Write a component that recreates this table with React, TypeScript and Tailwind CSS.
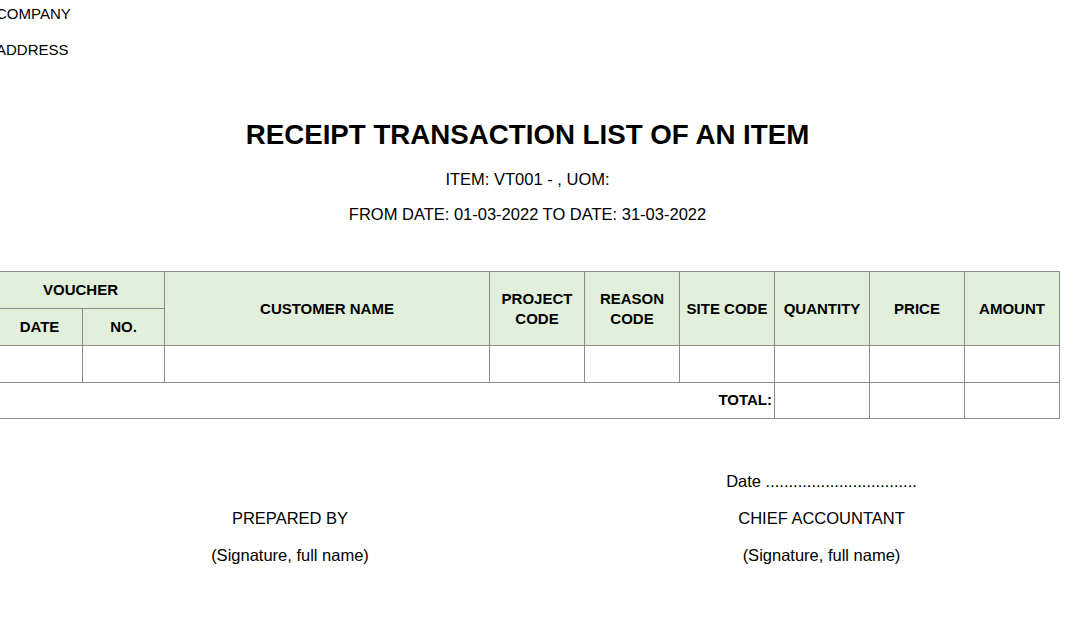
import React from "react";

const th = "border border-[#8c8c8c] bg-[#e2efda] font-bold text-center align-middle leading-[20px] p-0";
const td = "border border-[#8c8c8c] p-0";

export default function App() {
  return (
    <div className="w-[1083px] h-[640px] bg-white overflow-hidden text-black" style={{ fontFamily: '"Liberation Sans", Arial, sans-serif' }}>
      <div className="ml-[-4px] w-[1063px]">
        <div className="h-[28px] flex items-center text-[15px]">COMPANY</div>
        <div className="mt-[8px] h-[28px] flex items-center text-[15px]">ADDRESS</div>
        <div className="mt-[51px] h-[40px] flex items-center justify-center text-[27.7px] font-bold">RECEIPT TRANSACTION LIST OF AN ITEM</div>
        <div className="mt-[10px] h-[28px] flex items-center justify-center text-[16.5px]">ITEM: VT001 - , UOM:</div>
        <div className="mt-[7px] h-[28px] flex items-center justify-center text-[16.5px]">FROM DATE: 01-03-2022 TO DATE: 31-03-2022</div>
        <table className="mt-[43px] border-collapse table-fixed w-[1063px] text-[15px]">
          <colgroup>
            <col className="w-[86px]" />
            <col className="w-[82px]" />
            <col className="w-[325px]" />
            <col className="w-[95px]" />
            <col className="w-[95px]" />
            <col className="w-[95px]" />
            <col className="w-[95px]" />
            <col className="w-[95px]" />
            <col className="w-[95px]" />
          </colgroup>
          <tbody>
            <tr className="h-[37px]">
              <th colSpan={2} className={th}>VOUCHER</th>
              <th rowSpan={2} className={th}>CUSTOMER NAME</th>
              <th rowSpan={2} className={th}>PROJECT<br />CODE</th>
              <th rowSpan={2} className={th}>REASON<br />CODE</th>
              <th rowSpan={2} className={th}>SITE CODE</th>
              <th rowSpan={2} className={th}>QUANTITY</th>
              <th rowSpan={2} className={th}>PRICE</th>
              <th rowSpan={2} className={th}>AMOUNT</th>
            </tr>
            <tr className="h-[37px]">
              <th className={th}>DATE</th>
              <th className={th}>NO.</th>
            </tr>
            <tr className="h-[37px]">
              <td className={td}></td>
              <td className={td}></td>
              <td className={td}></td>
              <td className={td}></td>
              <td className={td}></td>
              <td className={td}></td>
              <td className={td}></td>
              <td className={td}></td>
              <td className={td}></td>
            </tr>
            <tr className="h-[36px]">
              <td colSpan={6} className={td + " text-right font-bold pr-[2px]"}>TOTAL:</td>
              <td className={td}></td>
              <td className={td}></td>
              <td className={td}></td>
            </tr>
          </tbody>
        </table>
        <div className="mt-[48px] flex text-[16.5px]">
          <div className="w-[588px] flex flex-col items-center">
            <div className="h-[28px]"></div>
            <div className="mt-[9px] h-[28px] flex items-center">PREPARED BY</div>
            <div className="mt-[9px] h-[28px] flex items-center">(Signature, full name)</div>
          </div>
          <div className="w-[475px] flex flex-col items-center">
            <div className="h-[28px] flex items-center">Date .................................</div>
            <div className="mt-[9px] h-[28px] flex items-center">CHIEF ACCOUNTANT</div>
            <div className="mt-[9px] h-[28px] flex items-center">(Signature, full name)</div>
          </div>
        </div>
      </div>
    </div>
  );
}
